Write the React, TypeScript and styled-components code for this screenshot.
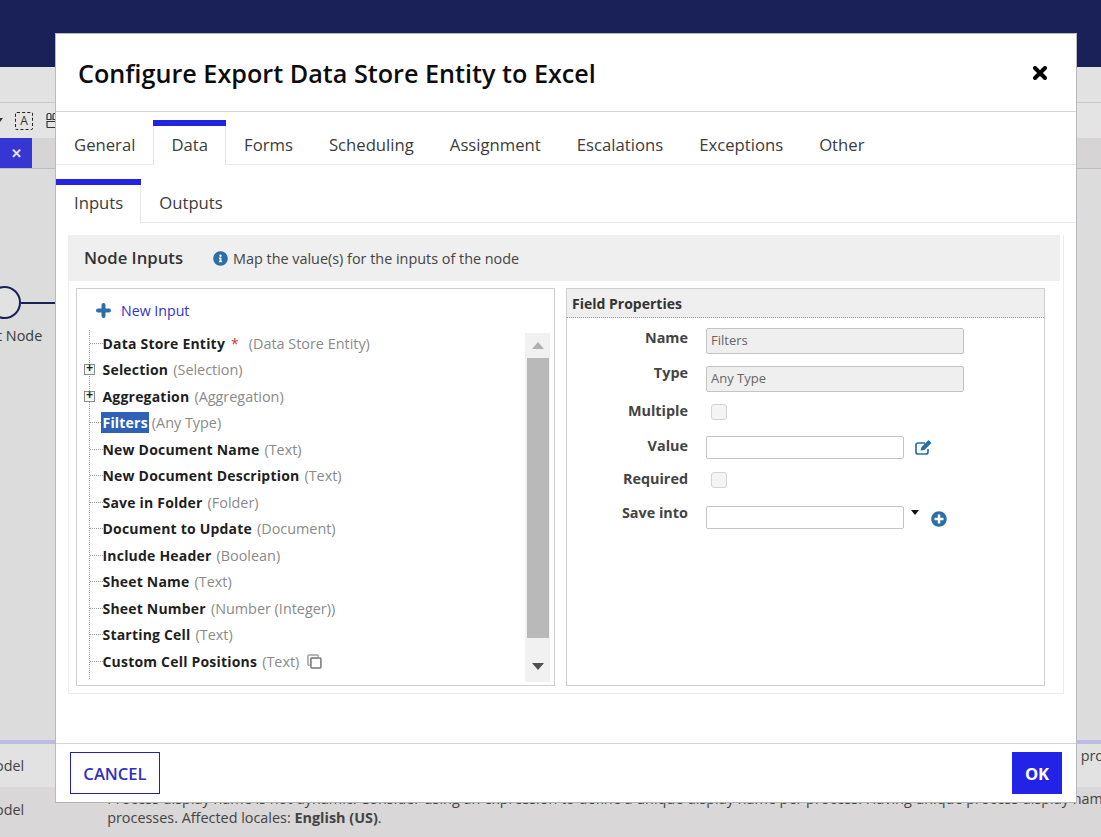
import React from 'react';
import styled, { createGlobalStyle } from 'styled-components';
import { FaInfoCircle, FaPlusCircle } from 'react-icons/fa';

const GlobalStyle = createGlobalStyle`
	html, body {
		margin: 0;
		padding: 0;
		overflow: hidden;
		background: #dcdcdc;
	}
	* {
		box-sizing: border-box;
	}
`

const topTabs = ['General', 'Data', 'Forms', 'Scheduling', 'Assignment', 'Escalations', 'Exceptions', 'Other'];
const subTabs = ['Inputs', 'Outputs'];

const treeRows = [
	{ name: 'Data Store Entity', type: '(Data Store Entity)', required: true },
	{ name: 'Selection', type: '(Selection)', expandable: true },
	{ name: 'Aggregation', type: '(Aggregation)', expandable: true },
	{ name: 'Filters', type: '(Any Type)', selected: true },
	{ name: 'New Document Name', type: '(Text)' },
	{ name: 'New Document Description', type: '(Text)' },
	{ name: 'Save in Folder', type: '(Folder)' },
	{ name: 'Document to Update', type: '(Document)' },
	{ name: 'Include Header', type: '(Boolean)' },
	{ name: 'Sheet Name', type: '(Text)' },
	{ name: 'Sheet Number', type: '(Number (Integer))' },
	{ name: 'Starting Cell', type: '(Text)' },
	{ name: 'Custom Cell Positions', type: '(Text)', copy: true },
];

const CloseIcon = () => (
	<svg width="16" height="16" viewBox="0 0 16 16">
		<path d="M3 3l10 10M13 3L3 13" stroke="#000" strokeWidth="4" strokeLinecap="round" />
	</svg>
);

const PlusIcon = () => (
	<svg width="15" height="15" viewBox="0 0 15 15">
		<path d="M7.5 2v11M2 7.5h11" stroke="#2b6ea8" strokeWidth="4" strokeLinecap="round" />
	</svg>
);

const CopyIcon = () => (
	<svg width="15" height="15" viewBox="0 0 16 16" fill="none">
		<path d="M12 3V2q0-1-1-1H2q-1 0-1 1v9q0 1 1 1h1" stroke="#a0a0a0" strokeWidth="1.6" />
		<path d="M3 4h9v1H4v7H3z" fill="#c4c4c4" />
		<rect x="4.2" y="4.2" width="10.6" height="10.6" rx="1" stroke="#777" strokeWidth="1.6" />
	</svg>
);

const EditGlyph = () => (
	<svg width="18" height="15" viewBox="0 0 18 15" fill="none">
		<path d="M13 9v3q0 2-2 2H3q-2 0-2-2V5q0-2 2-2h7" stroke="#2b6ea8" strokeWidth="1.7" />
		<path d="M5.5 10.5l1-3.5L13.5 0l3 3-7 7z" fill="#2b6ea8" />
	</svg>
);

export default function App() {
	return (
		<Page>
			<GlobalStyle />
			<NavBar />
			<ToolBand />
			<ToolRow>
				<ToolCaret />
				<DashedA>A</DashedA>
				<GridGlyph viewBox="0 0 12 16">
					<path d="M1 7V3q0-2 2-2h1q1 0 1 2v4zM7 7V3q0-2 1-2h2q1 0 1 2v4zM1 9h10v5q0 1-1 1H2q-1 0-1-1z" fill="none" stroke="#333" strokeWidth="1.2" />
				</GridGlyph>
			</ToolRow>
			<TabRow>
				<ActiveCanvasTab>✕</ActiveCanvasTab>
			</TabRow>
			<Canvas>
				<NodeLine>
					<NodeCircle />
					<Connector />
				</NodeLine>
				<NodeLabel>t Node</NodeLabel>
			</Canvas>
			<BottomPanel>
				<BottomRow>
					<span>odel</span>
					<RightText>pro</RightText>
				</BottomRow>
				<BottomMessage>
					<span>odel</span>
					<MessageText>
						Process display name is not dynamic. Consider using an expression to define a unique display name per process. Having unique process display names
						<br />
						processes. Affected locales: <b>English (US)</b>.
					</MessageText>
				</BottomMessage>
			</BottomPanel>

			<Dialog>
				<Header>
					<Title>Configure Export Data Store Entity to Excel</Title>
					<CloseIcon />
				</Header>
				<Tabs>
					{topTabs.map((t) => (
						<Tab key={t} $active={t === 'Data'}>{t}</Tab>
					))}
				</Tabs>
				<SubTabs>
					{subTabs.map((t) => (
						<SubTab key={t} $active={t === 'Inputs'}>{t}</SubTab>
					))}
				</SubTabs>
				<Body>
					<Section>
						<SectionHead>
							<SectionTitle>Node Inputs</SectionTitle>
							<FaInfoCircle size={15} color="#2b6ea8" />
							<SectionHint>Map the value(s) for the inputs of the node</SectionHint>
						</SectionHead>
						<Columns>
							<TreePanel>
								<NewInput>
									<PlusIcon />
									<span>New Input</span>
								</NewInput>
								<TreeArea>
									<Tree>
										{treeRows.map((r) => (
											<TreeRow key={r.name}>
												{r.expandable ? <Expander>+</Expander> : <Dots />}
												<RowName $selected={r.selected}>{r.name}</RowName>
												{r.required && <Required>*</Required>}
												<RowType $wide={r.required} $tight={r.selected}>{r.type}</RowType>
												{r.copy && <CopyIcon />}
											</TreeRow>
										))}
									</Tree>
									<Scrollbar>
										<ScrollArrow $up />
										<ScrollThumb />
										<ScrollArrow />
									</Scrollbar>
								</TreeArea>
							</TreePanel>
							<PropsPanel>
								<PropsHead>Field Properties</PropsHead>
								<PropsGrid>
									<PropLabel>Name</PropLabel>
									<ReadOnlyField>Filters</ReadOnlyField>
									<PropLabel $raised>Type</PropLabel>
									<ReadOnlyField>Any Type</ReadOnlyField>
									<PropLabel $raised>Multiple</PropLabel>
									<CheckBox />
									<PropLabel>Value</PropLabel>
									<FieldLine>
										<EmptyField />
										<EditIcon><EditGlyph /></EditIcon>
									</FieldLine>
									<PropLabel $raised>Required</PropLabel>
									<CheckBox />
									<PropLabel $raised>Save into</PropLabel>
									<FieldLine>
										<EmptyField />
										<Caret />
										<AddIcon><FaPlusCircle size={16} color="#2b6ea8" /></AddIcon>
									</FieldLine>
								</PropsGrid>
							</PropsPanel>
						</Columns>
					</Section>
				</Body>
				<Footer>
					<CancelButton>CANCEL</CancelButton>
					<OkButton>OK</OkButton>
				</Footer>
			</Dialog>
		</Page>
	)
}

const Page = styled.div`
	position: relative;
	width: 1101px;
	height: 837px;
	overflow: hidden;
	display: flex;
	flex-direction: column;
	font-family: "Open Sans", "Noto Sans", sans-serif;
	color: #333;
	background: #dcdcdc;
`

const NavBar = styled.div`
	height: 67px;
	background: #1a2158;
`

const ToolBand = styled.div`
	height: 36px;
	background: #e2e2e2;
	border-bottom: 1px solid #c9c9c9;
`

const ToolRow = styled.div`
	height: 35px;
	background: #e4e4e4;
	display: flex;
	align-items: center;
	gap: 13px;
	padding-left: 15px;
	position: relative;
`

const ToolCaret = styled.span`
	position: absolute;
	left: -3px;
	top: 15px;
	border-left: 3px solid transparent;
	border-right: 3px solid transparent;
	border-top: 4px solid #333;
`

const DashedA = styled.div`
	width: 18px;
	height: 18px;
	border: 1px dashed #222;
	border-radius: 2px;
	font-size: 12px;
	line-height: 16px;
	text-align: center;
`

const GridGlyph = styled.svg`
	width: 12px;
	height: 17px;
	flex-shrink: 0;
`

const TabRow = styled.div`
	height: 31px;
	background: #d6d4d4;
	border-bottom: 1px solid #bdbdbd;
`

const ActiveCanvasTab = styled.div`
	width: 32px;
	height: 30px;
	background: #3636d2;
	color: #e8e8f4;
	font-size: 13px;
	font-weight: 700;
	line-height: 30px;
	text-align: center;
`

const Canvas = styled.div`
	height: 571px;
	background: #dcdcdc;
	padding-top: 117px;
	overflow: hidden;
`

const NodeLine = styled.div`
	display: flex;
	align-items: center;
	margin-left: -12px;
`

const NodeCircle = styled.div`
	width: 33px;
	height: 33px;
	border-radius: 50%;
	border: 2px solid #1a2158;
	background: #e2e2e2;
	flex-shrink: 0;
`

const Connector = styled.div`
	width: 40px;
	height: 2px;
	background: #1a2158;
`

const NodeLabel = styled.div`
	margin-top: 7px;
	margin-left: -3px;
	font-size: 14.4px;
	line-height: 20px;
	color: #3a3a3a;
`

const BottomPanel = styled.div`
	flex: 1;
	border-top: 4px solid #bcbce2;
	background: #dddbdb;
	font-size: 14.4px;
	color: #444;
`

const BottomRow = styled.div`
	height: 43px;
	display: flex;
	justify-content: space-between;
	align-items: center;
	background: #e2e2e2;

	> span:first-child {
		margin-left: -5px;
	}
`

const RightText = styled.span`
	margin-right: -3px;
	margin-bottom: 20px;
`

const BottomMessage = styled.div`
	display: flex;
	background: #d9d7d7;
	height: 50px;
	padding-top: 13px;

	> span:first-child {
		margin-left: -5px;
	}
`

const MessageText = styled.div`
	margin-left: 83px;
	line-height: 19px;
	white-space: nowrap;
	margin-top: -11px;

	b {
		font-weight: 700;
	}
`

const Dialog = styled.div`
	position: absolute;
	left: 55px;
	top: 33px;
	width: 1022px;
	height: 769px;
	background: #fff;
	border: 1px solid #b9b9c4;
	border-bottom: none;
	box-shadow: 0 1px 0 #b5b5b5;
	display: flex;
	flex-direction: column;
`

const Header = styled.div`
	height: 78px;
	flex-shrink: 0;
	display: flex;
	align-items: center;
	justify-content: space-between;
	padding: 0 28px 0 22px;
	border-bottom: 1px solid #d4d4d4;
`

const Title = styled.h1`
	margin: 0;
	font-size: 25.2px;
	font-weight: 600;
	color: #0c0c0c;
`

const Tabs = styled.div`
	height: 53px;
	flex-shrink: 0;
	display: flex;
	align-items: flex-end;
	padding-top: 8px;
	border-bottom: 1px solid #e8e8e8;
`

const Tab = styled.div<{ $active?: boolean }>`
	height: 45px;
	padding: 0 18px;
	font-size: 16.7px;
	line-height: 37px;
	color: #3c3c3c;
	margin-bottom: -1px;
	background: ${({ $active }) => ($active ? '#fff' : 'transparent')};
	border-top: 6px solid ${({ $active }) => ($active ? '#2323e4' : 'transparent')};
	box-shadow: ${({ $active }) => ($active ? 'inset 1px 0 #e4e4e4, inset -1px 0 #e4e4e4' : 'none')};
`

const SubTabs = styled(Tabs)`
	height: 58px;
	padding-top: 14px;
`

const SubTab = styled(Tab) <{ $active?: boolean }>`
	height: 44px;
	line-height: 36px;
	box-shadow: ${({ $active }) => ($active ? 'inset -1px 0 #e4e4e4' : 'none')};
`

const Body = styled.div`
	flex: 1;
	padding: 12px 12px 0;
`

const Section = styled.div`
	height: 459px;
	border: 1px solid #ececec;
	border-top: none;
`

const SectionHead = styled.div`
	height: 46px;
	display: flex;
	align-items: center;
	background: #efefef;
	padding-left: 15px;
	margin-right: 3px;
`

const SectionTitle = styled.div`
	font-size: 16.7px;
	font-weight: 600;
	color: #333;
	margin-right: 30px;
	margin-top: -1px;
`

const SectionHint = styled.div`
	font-size: 14.4px;
	color: #444;
	margin-left: 5px;
`

const Columns = styled.div`
	display: flex;
	gap: 11px;
	padding: 7px 18px 0 7px;
`

const TreePanel = styled.div`
	width: 479px;
	height: 398px;
	border: 1px solid #cfcfcf;
	padding-top: 7px;
`

const NewInput = styled.div`
	display: flex;
	align-items: center;
	gap: 10px;
	height: 30px;
	margin-top: -1px;
	padding-left: 19px;
	font-size: 14.2px;
	color: #3232c8;
`

const TreeArea = styled.div`
	display: flex;
	justify-content: space-between;
	margin-top: 8px;
`

const Tree = styled.div`
	flex: 1;
	height: 350px;
	background-image: linear-gradient(#999 50%, transparent 50%);
	background-size: 1px 2px;
	background-repeat: repeat-y;
	background-position: 12px 0;
	margin-top: -3px;
	padding-bottom: 3px;
`

const TreeRow = styled.div`
	height: 26.5px;
	display: flex;
	align-items: center;
	font-size: 14px;
	white-space: nowrap;
`

const Dots = styled.span`
	width: 12.5px;
	margin-left: 13px;
	height: 1px;
	flex-shrink: 0;
	background-image: linear-gradient(90deg, #999 50%, transparent 50%);
	background-size: 2px 1px;
`

const Expander = styled.span`
	width: 11px;
	height: 11px;
	margin: 0 7.5px 0 7px;
	flex-shrink: 0;
	border: 1px solid #8a8a8a;
	background: #f6f6f6;
	color: #222;
	font-size: 12px;
	font-weight: 700;
	line-height: 8px;
	text-align: center;
	font-family: "Liberation Mono", monospace;
`

const RowName = styled.span<{ $selected?: boolean }>`
	font-weight: 700;
	color: ${({ $selected }) => ($selected ? '#fff' : '#1f1f1f')};
	background: ${({ $selected }) => ($selected ? '#2f62b6' : 'transparent')};
	padding: ${({ $selected }) => ($selected ? '1px 1px 1px 2px' : '0')};
	margin-left: ${({ $selected }) => ($selected ? '-2px' : '0')};
	letter-spacing: 0.2px;
`

const Required = styled.span`
	color: #e03030;
	margin-left: 6px;
`

const RowType = styled.span<{ $wide?: boolean; $tight?: boolean }>`
	color: #8a8a8a;
	font-size: 14.4px;
	margin-left: ${({ $wide, $tight }) => ($wide ? '10px' : $tight ? '3px' : '5px')};
	margin-right: 8px;
`

const Scrollbar = styled.div`
	width: 25px;
	height: 349px;
	margin-right: 4px;
	background: #f1f1f1;
	display: flex;
	flex-direction: column;
	align-items: center;
`

const ScrollArrow = styled.div<{ $up?: boolean }>`
	width: 0;
	height: 0;
	border-left: 6px solid transparent;
	border-right: 6px solid transparent;
	margin-top: ${({ $up }) => ($up ? '9px' : '25px')};
	margin-bottom: ${({ $up }) => ($up ? '9px' : '0')};
	${({ $up }) => ($up ? 'border-bottom: 7px solid #b0b0b0;' : 'border-top: 7px solid #505050;')}
`

const ScrollThumb = styled.div`
	width: 22px;
	height: 280px;
	flex-shrink: 0;
	background: #b9b9b9;
`

const PropsPanel = styled.div`
	width: 479px;
	height: 398px;
	border: 1px solid #cfcfcf;
`

const PropsHead = styled.div`
	height: 29px;
	background: #efefef;
	border-bottom: 1px dotted #999;
	font-size: 14px;
	font-weight: 700;
	line-height: 30px;
	padding-left: 5px;
	color: #333;
`

const PropsGrid = styled.div`
	display: grid;
	grid-template-columns: 121px 1fr;
	grid-template-rows: 38px 38px 32px 36px 34px 26px;
	column-gap: 18px;
	padding-top: 10px;
	align-items: start;
`

const PropLabel = styled.div<{ $raised?: boolean }>`
	font-size: 14.4px;
	line-height: 20px;
	font-weight: 700;
	color: #444;
	text-align: right;
	margin-top: ${({ $raised }) => ($raised ? '-3px' : '0')};
`

const ReadOnlyField = styled.div`
	width: 258px;
	height: 26px;
	border: 1px solid #c4c4c4;
	border-radius: 2px;
	background: #efefef;
	font-size: 13px;
	line-height: 22px;
	padding-left: 4px;
	color: #666;
`

const CheckBox = styled.div`
	width: 16px;
	height: 16px;
	margin-left: 5px;
	border: 1px solid #d4d4d4;
	border-radius: 3px;
	background: #f4f4f4;
`

const FieldLine = styled.div`
	display: flex;
	align-items: center;
`

const EmptyField = styled.div`
	width: 198px;
	height: 23px;
	border: 1px solid #c4c4c4;
	border-radius: 2px;
	background: #fff;
`

const EditIcon = styled.span`
	display: flex;
	margin-left: 11px;
`

const Caret = styled.span`
	width: 0;
	height: 0;
	border-left: 4px solid transparent;
	border-right: 4px solid transparent;
	border-top: 5px solid #111;
	margin: -10px 0 0 7px;
`

const AddIcon = styled.span`
	display: flex;
	margin: 2px 0 0 12px;
`

const Footer = styled.div`
	height: 59px;
	flex-shrink: 0;
	margin-top: auto;
	border-top: 1px solid #d4d4d4;
	display: flex;
	align-items: flex-start;
	justify-content: space-between;
	padding: 8px 14px 0;
`

const CancelButton = styled.div`
	width: 90px;
	height: 42px;
	border: 1px solid #2222b8;
	font-size: 16.6px;
	font-weight: 600;
	line-height: 42px;
	text-align: center;
	color: #2f2fc4;
	background: #fff;
`

const OkButton = styled.div`
	width: 50px;
	height: 42px;
	background: #2323e8;
	color: #fff;
	font-size: 16.6px;
	font-weight: 700;
	line-height: 43px;
	text-align: center;
`
